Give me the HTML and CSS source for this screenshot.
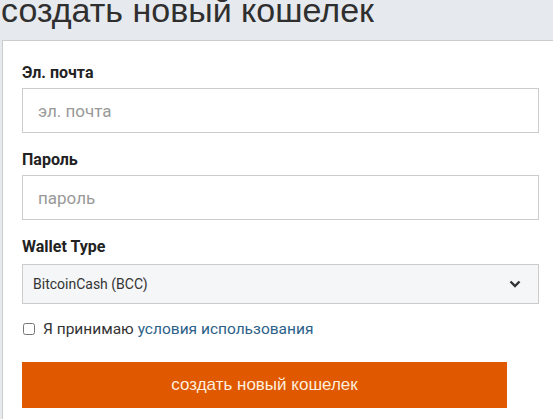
FILE: index.html
```html
<!DOCTYPE html>
<html lang="ru">
<head>
    <meta charset="UTF-8">
    <meta name="viewport" content="width=device-width, initial-scale=1.0">
    <title>Создать новый кошелек</title>
    <link rel="stylesheet" href="styles.css">
</head>
<body>
    <div class="page">
        <h1 class="page-title">создать новый кошелек</h1>

        <div class="card">
            <form class="wallet-form">
                <label class="field-label" for="email">Эл. почта</label>
                <input class="field-input" type="email" id="email" placeholder="эл. почта">

                <label class="field-label" for="password">Пароль</label>
                <input class="field-input" type="password" id="password" placeholder="пароль">

                <label class="field-label" for="walletType">Wallet Type</label>
                <div class="select-wrap">
                    <select class="field-select" id="walletType">
                        <option>BitcoinCash (BCC)</option>
                    </select>
                    <svg class="select-arrow" width="12" height="8" viewBox="0 0 12 8">
                        <path d="M1.5 1.5 L6 6 L10.5 1.5" fill="none" stroke="#333" stroke-width="2.4"/>
                    </svg>
                </div>

                <label class="terms">
                    <input type="checkbox" class="terms-box">
                    <span>Я принимаю <a href="#terms">условия использования</a></span>
                </label>

                <button type="submit" class="submit-btn">создать новый кошелек</button>
            </form>
        </div>
    </div>
</body>
</html>
```

FILE: styles.css
```css
* {
    margin: 0;
    padding: 0;
    box-sizing: border-box;
}

html, body {
    height: 100%;
}

body {
    font-family: Roboto, "Liberation Sans", sans-serif;
    background-color: #e6e9ed;
    color: #333;
    overflow: hidden;
}

.page {
    min-height: 100%;
}

.page-title {
    font-family: "Liberation Sans", Arial, sans-serif;
    font-weight: normal;
    font-size: 34px;
    line-height: 34px;
    color: #2f2f2f;
    margin: -7px 0 13px 1px;
}

.card {
    background-color: #fff;
    border: 1px solid #ccc;
    border-right: none;
    border-bottom: none;
    margin-left: 2px;
    margin-right: -10px;
    padding: 22px 24px 40px 19px;
    min-height: 400px;
}

.wallet-form {
    display: flex;
    flex-direction: column;
}

.field-label {
    font-family: Roboto, "Liberation Sans", sans-serif;
    font-weight: bold;
    font-size: 16px;
    line-height: 20px;
    color: #222;
    margin-bottom: 5px;
}

.field-input {
    height: 45px;
    border: 1px solid #ccc;
    padding: 0 15px;
    font-family: Roboto, sans-serif;
    font-size: 17px;
    color: #333;
    margin-bottom: 17px;
    outline: none;
}

.field-input::placeholder {
    color: #999;
}

.select-wrap {
    position: relative;
    margin-top: 2px;
    margin-bottom: 15px;
}

.field-select {
    width: 100%;
    height: 40px;
    border: 1px solid #ccc;
    background-color: #f5f6f8;
    padding: 0 10px;
    font-family: Roboto, sans-serif;
    font-size: 14px;
    color: #333;
    appearance: none;
    -webkit-appearance: none;
    border-radius: 0;
}

.select-arrow {
    position: absolute;
    right: 18px;
    top: 16px;
    pointer-events: none;
}

.terms {
    display: flex;
    align-items: center;
    gap: 8px;
    height: 20px;
    font-size: 15.5px;
    color: #333;
    margin-bottom: 23px;
}

.terms-box {
    width: 12px;
    height: 12px;
    margin: 0 0 0 1px;
}

.terms a {
    color: #2c6189;
    text-decoration: none;
}

.submit-btn {
    width: 485px;
    height: 46px;
    background-color: #e05800;
    color: #fdeedd;
    border: none;
    font-family: "Liberation Sans", Arial, sans-serif;
    font-size: 17px;
    cursor: pointer;
}

.submit-btn:hover {
    background-color: #c84e00;
}
```
